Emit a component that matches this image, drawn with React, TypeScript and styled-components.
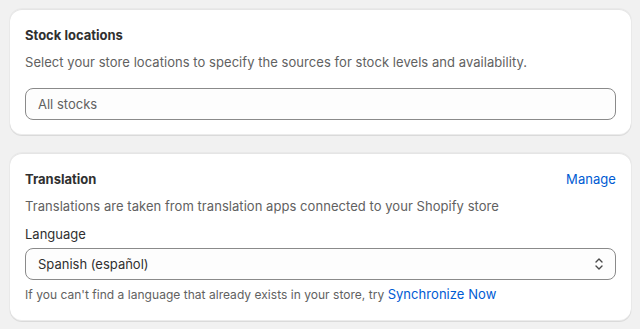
import React from 'react'
import styled, { createGlobalStyle } from 'styled-components'

const GlobalStyle = createGlobalStyle`
  body {
    margin: 0;
    background: #f1f1f1;
    font-family: Inter, "Noto Sans", sans-serif;
    font-size: 13px;
    color: #303030;
  }
`

export default function App() {
  return (
    <>
      <GlobalStyle />
      <Page>
        <Card $bottom={15}>
          <Header>
            <Title>Stock locations</Title>
          </Header>
          <Description>Select your store locations to specify the sources for stock levels and availability.</Description>
          <Field $top={16}>
            <Input placeholder="All stocks" />
          </Field>
        </Card>
        <Card $bottom={16}>
          <Header>
            <Title>Translation</Title>
            <Link href="#">Manage</Link>
          </Header>
          <Description>Translations are taken from translation apps connected to your Shopify store</Description>
          <Field $top={8}>
            <Label>Language</Label>
            <SelectBox>
              <span>Spanish (español)</span>
              <svg width="12" height="16" viewBox="0 0 12 16" fill="none" stroke="#4a4a4a" strokeWidth="1.4" strokeLinecap="round" strokeLinejoin="round">
                <path d="M3 6l3-3 3 3" />
                <path d="M3 10l3 3 3-3" />
              </svg>
            </SelectBox>
            <Help>
              If you can't find a language that already exists in your store, try <Link href="#">Synchronize Now</Link>
            </Help>
          </Field>
        </Card>
      </Page>
    </>
  )
}

const Page = styled.div`
  display: flex;
  flex-direction: column;
  gap: 18px;
  padding: 9px 9px 9px 10px;
`

const Card = styled.section<{ $bottom: number }>`
  background: #fff;
  border-radius: 12px;
  padding: 16px 15px ${p => p.$bottom}px 15px;
  box-shadow: 0 1px 0 0 rgba(26, 26, 26, 0.07), 0 1px 0 0 rgba(204, 204, 204, 0.5) inset, 0 -1px 0 0 rgba(0, 0, 0, 0.08) inset, 0 0 0 1px rgba(0,0,0,0.03);
`

const Header = styled.div`
  display: flex;
  justify-content: space-between;
  align-items: center;
  height: 20px;
`

const Title = styled.h2`
  margin: 0;
  font-size: 13px;
  font-weight: 650;
  line-height: 20px;
  color: #303030;
`

const Link = styled.a`
  color: #005bd3;
  text-decoration: none;
  font-size: 13px;
  line-height: 20px;
  letter-spacing: 0.05px;
`

const Description = styled.p`
  margin: 7px 0 0;
  line-height: 20px;
  color: #616161;
  letter-spacing: 0.05px;
`

const Field = styled.div<{ $top: number }>`
  margin-top: ${p => p.$top}px;
  display: flex;
  flex-direction: column;
`

const Input = styled.input`
  box-sizing: border-box;
  height: 32px;
  width: 100%;
  padding: 0 12px;
  border: 1px solid #8a8a8a;
  border-radius: 8px;
  background: #fdfdfd;
  font-family: inherit;
  font-size: 13px;
  color: #303030;
  &::placeholder {
    color: #616161;
  }
`

const Label = styled.label`
  line-height: 20px;
  color: #303030;
  margin-bottom: 4px;
`

const SelectBox = styled.div`
  box-sizing: border-box;
  height: 32px;
  display: flex;
  align-items: center;
  justify-content: space-between;
  padding: 0 10px 0 12px;
  border: 1px solid #8a8a8a;
  border-radius: 8px;
  background: #fdfdfd;
  color: #303030;
`

const Help = styled.div`
  margin-top: 4px;
  font-size: 12px;
  line-height: 20px;
  color: #616161;
  letter-spacing: 0.03px;
`
